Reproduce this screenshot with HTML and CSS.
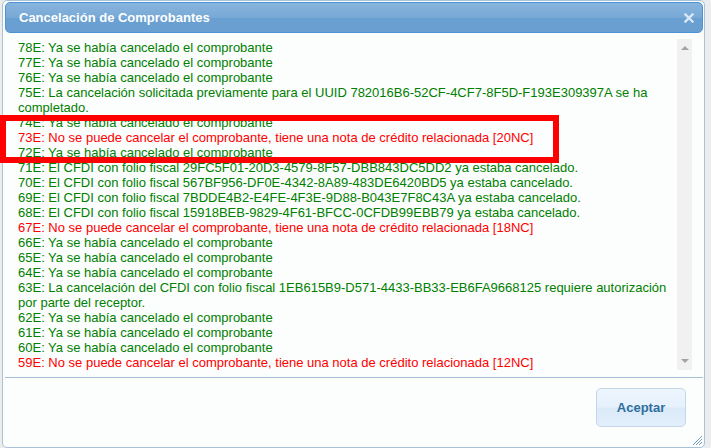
FILE: index.html
```html
<!DOCTYPE html>
<html lang="es">
<head>
<meta charset="utf-8">
<title>Cancelación de Comprobantes</title>
<link rel="stylesheet" href="styles.css">
</head>
<body>
<div class="dialog">
  <div class="titlebar">
    <span class="title">Cancelación de Comprobantes</span>
    <svg class="close" width="10" height="10" viewBox="0 0 10 10" aria-hidden="true">
      <path d="M1.5 1.5 L8.5 8.5 M8.5 1.5 L1.5 8.5" stroke="#d9e8f6" stroke-width="2.4" stroke-linecap="square"/>
    </svg>
  </div>
  <div class="content">
    <div class="log">
      <div class="ok">78E: Ya se había cancelado el comprobante</div>
      <div class="ok">77E: Ya se había cancelado el comprobante</div>
      <div class="ok">76E: Ya se había cancelado el comprobante</div>
      <div class="ok">75E: La cancelación solicitada previamente para el UUID 782016B6-52CF-4CF7-8F5D-F193E309397A se ha completado.</div>
      <div class="ok">74E: Ya se había cancelado el comprobante</div>
      <div class="err">73E: No se puede cancelar el comprobante, tiene una nota de crédito relacionada [20NC]</div>
      <div class="ok">72E: Ya se había cancelado el comprobante</div>
      <div class="ok">71E: El CFDI con folio fiscal 29FC5F01-20D3-4579-8F57-DBB843DC5DD2 ya estaba cancelado.</div>
      <div class="ok">70E: El CFDI con folio fiscal 567BF956-DF0E-4342-8A89-483DE6420BD5 ya estaba cancelado.</div>
      <div class="ok">69E: El CFDI con folio fiscal 7BDDE4B2-E4FE-4F3E-9D88-B043E7F8C43A ya estaba cancelado.</div>
      <div class="ok">68E: El CFDI con folio fiscal 15918BEB-9829-4F61-BFCC-0CFDB99EBB79 ya estaba cancelado.</div>
      <div class="err">67E: No se puede cancelar el comprobante, tiene una nota de crédito relacionada [18NC]</div>
      <div class="ok">66E: Ya se había cancelado el comprobante</div>
      <div class="ok">65E: Ya se había cancelado el comprobante</div>
      <div class="ok">64E: Ya se había cancelado el comprobante</div>
      <div class="ok">63E: La cancelación del CFDI con folio fiscal 1EB615B9-D571-4433-BB33-EB6FA9668125 requiere autorización por parte del receptor.</div>
      <div class="ok">62E: Ya se había cancelado el comprobante</div>
      <div class="ok">61E: Ya se había cancelado el comprobante</div>
      <div class="ok">60E: Ya se había cancelado el comprobante</div>
      <div class="err">59E: No se puede cancelar el comprobante, tiene una nota de crédito relacionada [12NC]</div>
    </div>
    <div class="scrollbar">
      <span class="arrow up"></span>
      <span class="track"></span>
      <span class="arrow down"></span>
    </div>
  </div>
  <div class="buttonpane">
    <button class="btn" type="button">Aceptar</button>
  </div>
  <svg class="grip" width="12" height="12" viewBox="0 0 12 12" aria-hidden="true">
    <path d="M11 2 L2 11 M11 5 L5 11 M11 8 L8 11" stroke="#6f9fc8" stroke-width="1"/>
  </svg>
</div>
<div class="highlight"></div>
</body>
</html>
```
FILE: styles.css
```css
html, body {
  margin: 0;
  padding: 0;
}
body {
  background: #ececec;
  width: 711px;
  height: 448px;
  overflow: hidden;
  position: relative;
  font-family: "Liberation Sans", Arial, sans-serif;
  font-size: 13px;
}
.dialog {
  position: relative;
  box-sizing: border-box;
  margin-left: 2px;
  width: 703px;
  height: 448px;
  border: 1px solid #a9c2d8;
  border-radius: 5px;
  background: #fcfdfd;
  padding: 1px 1px 0 2px;
  display: flex;
  flex-direction: column;
}
.titlebar {
  box-sizing: border-box;
  height: 31px;
  border: 1px solid #4c93d4;
  border-radius: 5px;
  background: linear-gradient(#87b4dc 0%, #78a9d6 50%, #6aa0d1 52%, #6aa0d1 100%);
  display: flex;
  align-items: center;
  justify-content: space-between;
  padding: 0 8px 0 13px;
}
.title {
  color: #ffffff;
  font-weight: bold;
  font-size: 13px;
}
.close {
  display: block;
}
.content {
  display: flex;
  padding: 6px 11px 0 13px;
  height: 344px;
  box-sizing: border-box;
}
.log {
  flex: 1;
  padding-top: 1px;
  line-height: 15px;
  padding-right: 4px;
}
.ok {
  color: #008000;
}
.err {
  color: #ff0000;
}
.scrollbar {
  width: 15px;
  height: 331px;
  background: #f1f1f1;
  display: flex;
  flex-direction: column;
  align-items: center;
}
.arrow {
  width: 0;
  height: 0;
  border-left: 4px solid transparent;
  border-right: 4px solid transparent;
}
.arrow.up {
  margin-top: 7px;
  border-bottom: 4px solid #a3a3a3;
}
.arrow.down {
  margin-bottom: 7px;
  border-top: 4px solid #a3a3a3;
}
.track {
  flex: 1;
}
.buttonpane {
  border-top: 1px solid #a6c0d8;
  display: flex;
  justify-content: flex-end;
  padding: 10px 17px 0 0;
  flex: 1;
}
.btn {
  width: 90px;
  height: 39px;
  border: 1px solid #c2d7ea;
  border-radius: 5px;
  background: linear-gradient(#edf5fd 0%, #e6f1fc 48%, #dbeaf8 52%, #e3effb 100%);
  color: #2e6e9e;
  font-family: "Liberation Sans", Arial, sans-serif;
  font-weight: bold;
  font-size: 13px;
  padding: 0;
}
.grip {
  position: absolute;
  right: 1px;
  bottom: 1px;
}
.highlight {
  position: absolute;
  left: 0;
  top: 115px;
  width: 559px;
  height: 48px;
  box-sizing: border-box;
  border: 6px solid #ff0000;
}
```
